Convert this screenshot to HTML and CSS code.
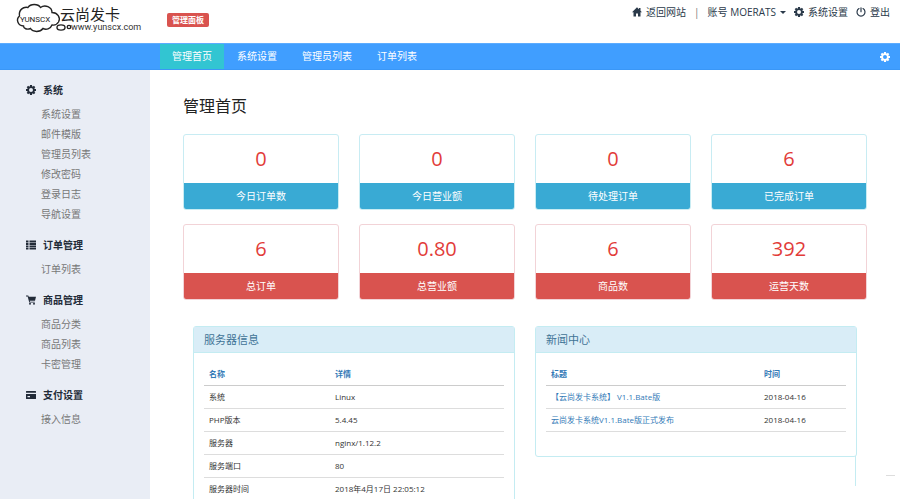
FILE: index.html
```html
<!DOCTYPE html>
<html lang="zh-CN">
<head>
<meta charset="utf-8">
<title>管理首页</title>
<link rel="stylesheet" href="styles.css">
</head>
<body>
<svg class="sprite" aria-hidden="true">
  <symbol id="cog" viewBox="0 0 20 20">
    <circle cx="10" cy="10" r="5.800" fill="none" stroke="currentColor" stroke-width="3.600"/>
    <path fill="none" stroke="currentColor" stroke-width="4.200" d="M10 0v4M10 16v4M0 10h4M16 10h4M2.800 2.800l2.800 2.800M14.400 14.400l2.800 2.800M2.800 17.200l2.800-2.800M14.400 5.600l2.800-2.800"/>
  </symbol>
  <symbol id="home" viewBox="0 0 20 20">
    <path fill="currentColor" d="M10 .5 0 10.500h3V19h5v-6h4v6h5v-8.500h3L17 7.500V2h-3v2.500z"/>
  </symbol>
  <symbol id="power" viewBox="0 0 20 20">
    <path fill="none" stroke="currentColor" stroke-width="2.400" stroke-linecap="round" d="M6 3.200a8 8 0 1 0 8 0M10 1.500v8"/>
  </symbol>
  <symbol id="list" viewBox="0 0 20 20">
    <path fill="currentColor" d="M0 1h5v4H0zM7 1h13v4H7zM0 6h5v4H0zM7 6h13v4H7zM0 11h5v4H0zM7 11h13v4H7zM0 16h5v3H0zM7 16h13v3H7z"/>
  </symbol>
  <symbol id="cart" viewBox="0 0 20 20">
    <path fill="currentColor" d="M0 1h4.500l1 2.500H20L18 11.500H7.500l.5 2h9.500V15H6.500L3.300 3H0z"/>
    <circle cx="8" cy="17.500" r="1.900" fill="currentColor"/>
    <circle cx="16" cy="17.500" r="1.900" fill="currentColor"/>
  </symbol>
  <symbol id="card" viewBox="0 0 20 20">
    <path fill="currentColor" d="M1 2h18q1 0 1 1v2.500H0V3q0-1 1-1zM0 8h20v9q0 1-1 1H1q-1 0-1-1zM3 12v2.500h5V12z" fill-rule="evenodd"/>
  </symbol>
</svg>

<header class="top">
  <a class="logo" href="#" aria-label="云尚发卡">
    <svg viewBox="0 0 124 32" role="img" aria-label="云尚发卡 www.yunscx.com">
      <path class="cloud" d="M7.500 22C2 22-.5 15.500 3.500 12 2.500 6 7 2.500 12 3.500c2.500-4 10-4 12.500 0C29 0 36 3 36 8.500c5.500 0 9 5 6.500 9.500-1.500 2.500-4 3.500-6.500 3-1.500 4-6 5-9 3.500-3 4-10 4-12.500 0-3.500 1.500-7 0-7-2.500z"/>
      <ellipse class="cloud" cx="45" cy="23.500" rx="4" ry="2.600"/>
      <ellipse class="cloud" cx="53" cy="23" rx="1.800" ry="1.600"/>
      <text class="logo-mark" x="4" y="18">YUNSCX</text>
      <text class="logo-name" x="44" y="16">云尚发卡</text>
      <text class="logo-url" x="55" y="26">www.yunscx.com</text>
    </svg>
  </a>
  <span class="badge">管理面板</span>
  <nav class="account">
    <a href="#"><svg class="icon"><use href="#home"/></svg>返回网站</a>
    <span class="divider">|</span>
    <button type="button" class="user">账号 MOERATS<span class="caret"></span></button>
    <a href="#"><svg class="icon"><use href="#cog"/></svg>系统设置</a>
    <a href="#"><svg class="icon"><use href="#power"/></svg>登出</a>
  </nav>
</header>

<nav class="bar">
  <a class="active" href="#">管理首页</a>
  <a href="#">系统设置</a>
  <a href="#">管理员列表</a>
  <a href="#">订单列表</a>
  <button type="button" class="bar-cog" aria-label="设置"><svg class="icon"><use href="#cog"/></svg></button>
</nav>

<div class="layout">
  <aside class="side">
    <section>
      <h2><svg class="icon"><use href="#cog"/></svg>系统</h2>
      <ul>
        <li><a href="#">系统设置</a></li>
        <li><a href="#">邮件模版</a></li>
        <li><a href="#">管理员列表</a></li>
        <li><a href="#">修改密码</a></li>
        <li><a href="#">登录日志</a></li>
        <li><a href="#">导航设置</a></li>
      </ul>
    </section>
    <section>
      <h2><svg class="icon"><use href="#list"/></svg>订单管理</h2>
      <ul>
        <li><a href="#">订单列表</a></li>
      </ul>
    </section>
    <section>
      <h2><svg class="icon"><use href="#cart"/></svg>商品管理</h2>
      <ul>
        <li><a href="#">商品分类</a></li>
        <li><a href="#">商品列表</a></li>
        <li><a href="#">卡密管理</a></li>
      </ul>
    </section>
    <section>
      <h2><svg class="icon"><use href="#card"/></svg>支付设置</h2>
      <ul>
        <li><a href="#">接入信息</a></li>
      </ul>
    </section>
  </aside>

  <main class="main">
    <h1>管理首页</h1>
    <div class="stats">
      <div class="stat info"><strong>0</strong><span>今日订单数</span></div>
      <div class="stat info"><strong>0</strong><span>今日营业额</span></div>
      <div class="stat info"><strong>0</strong><span>待处理订单</span></div>
      <div class="stat info"><strong>6</strong><span>已完成订单</span></div>
      <div class="stat danger"><strong>6</strong><span>总订单</span></div>
      <div class="stat danger"><strong>0.80</strong><span>总营业额</span></div>
      <div class="stat danger"><strong>6</strong><span>商品数</span></div>
      <div class="stat danger"><strong>392</strong><span>运营天数</span></div>
    </div>

    <div class="panels">
      <section class="panel">
        <h3>服务器信息</h3>
        <div class="panel-body">
          <table class="server">
            <thead><tr><th>名称</th><th>详情</th></tr></thead>
            <tbody>
              <tr><td>系统</td><td>Linux</td></tr>
              <tr><td>PHP版本</td><td>5.4.45</td></tr>
              <tr><td>服务器</td><td>nginx/1.12.2</td></tr>
              <tr><td>服务端口</td><td>80</td></tr>
              <tr><td>服务器时间</td><td>2018年4月17日 22:05:12</td></tr>
            </tbody>
          </table>
        </div>
      </section>
      <section class="panel news-panel">
        <h3>新闻中心</h3>
        <div class="panel-body">
          <table class="news">
            <thead><tr><th>标题</th><th>时间</th></tr></thead>
            <tbody>
              <tr><td><a href="#">【云尚发卡系统】 V1.1.Bate版</a></td><td>2018-04-16</td></tr>
              <tr><td><a href="#">云尚发卡系统V1.1.Bate版正式发布</a></td><td>2018-04-16</td></tr>
            </tbody>
          </table>
        </div>
      </section>
    </div>
  </main>
</div>
</body>
</html>
```

FILE: styles.css
```css
* {
  box-sizing: border-box;
}

body {
  display: flex;
  flex-direction: column;
  height: 100vh;
  margin: 0;
  overflow: hidden;
  background: #fff;
  color: #333;
  font: 10px/20px "Open Sans", "Noto Sans CJK SC", sans-serif;
}

a {
  color: inherit;
  text-decoration: none;
}

button {
  padding: 0;
  border: 0;
  background: none;
  color: inherit;
  font: inherit;
}

.sprite {
  display: none;
}

.icon {
  flex: none;
  width: 10px;
  height: 10px;
}

/* Header */
.top {
  display: flex;
  flex: none;
  align-items: flex-start;
  height: 43px;
  padding: 2px 10px 0 16px;
}

.logo {
  width: 124px;
  height: 32px;
  margin: 2px 27px 0 0;
}

.logo svg {
  display: block;
  width: 124px;
  height: 32px;
  overflow: visible;
}

.cloud {
  fill: #fff;
  stroke: #222;
  stroke-width: 1.4;
}

.logo-mark {
  fill: #222;
  font: 8px Roboto, sans-serif;
}

.logo-name {
  fill: #222;
  font: 15px "Noto Sans CJK SC", sans-serif;
}

.logo-url {
  fill: #333;
  font: 9px Roboto, sans-serif;
}

.badge {
  margin-top: 11px;
  padding: 0 5px;
  border-radius: 2px;
  background: #d9534f;
  color: #fff;
  font-size: 8px;
  font-weight: 700;
  line-height: 14px;
}

.account {
  display: flex;
  gap: 8px;
  margin-left: auto;
  color: #2b3a4a;
}

.account a,
.user {
  display: flex;
  align-items: center;
  gap: 4px;
}

.divider {
  color: #777;
}

.caret {
  border: 3px solid transparent;
  border-top-color: currentColor;
  border-bottom: 0;
}

/* Main navigation */
.bar {
  display: flex;
  flex: none;
  gap: 1px;
  height: 27px;
  padding: 0 10px 0 160px;
  border-top: 1px solid #5cacff;
  border-bottom: 1px solid #3a97f7;
  background: #409eff;
  color: #fff;
  line-height: 25px;
}

.bar a {
  padding: 0 12px;
}

.bar .active {
  background: #32c5d2;
}

.bar-cog {
  display: flex;
  align-items: center;
  margin-left: auto;
}

/* Sidebar */
.layout {
  display: flex;
  flex: 1;
  min-height: 0;
}

.side {
  flex: none;
  width: 150px;
  padding: 10px 0 0 26px;
  background: #e9edf5;
}

.side section {
  margin-bottom: 11px;
}

.side h2 {
  display: flex;
  align-items: center;
  gap: 7px;
  margin: 0 0 4px;
  color: #222b38;
  font-size: 10px;
  font-weight: 700;
}

.side ul {
  margin: 0;
  padding: 0 0 0 15px;
  color: #777;
  list-style: none;
}

.side li a {
  display: block;
}

/* Content */
.main {
  flex: 1;
  min-width: 0;
  overflow: hidden;
  padding: 24px 33px 0;
}

.main h1 {
  margin: 0 0 16px;
  color: #222;
  font-size: 16px;
  font-weight: 400;
  line-height: 24px;
}

.stats {
  display: grid;
  grid-template-columns: repeat(4, 1fr);
  gap: 14px 20px;
}

.stat {
  display: flex;
  flex-direction: column;
  overflow: hidden;
  border: 1px solid;
  border-radius: 3px;
  text-align: center;
}

.stat strong {
  color: #e23c39;
  font-size: 20px;
  font-weight: 400;
  line-height: 48px;
}

.stat span {
  color: #fff;
  line-height: 26px;
}

.info {
  border-color: #c8ecf3;
}

.info span {
  background: #39aad4;
}

.danger {
  border-color: #f2d3d7;
}

.danger span {
  background: #d9534f;
}

.panels {
  display: grid;
  grid-template-columns: 1fr 1fr;
  align-items: start;
  gap: 20px;
  margin-top: 26px;
  padding: 0 10px;
}

.panel {
  border: 1px solid #c4ecf2;
  border-radius: 3px;
}

.panel h3 {
  margin: 0;
  padding: 0 10px;
  border-bottom: 1px solid #c4ecf2;
  background: #d9edf7;
  color: #3f7396;
  font-size: 11px;
  font-weight: 400;
  line-height: 25px;
}

.panel-body {
  padding: 10px 10px 24px;
}

table {
  width: 100%;
  border-collapse: separate;
  border-spacing: 0;
  table-layout: fixed;
  font-size: 8px;
  line-height: 22px;
}

th,
td {
  padding: 0 5px;
  border-bottom: 1px solid #ddd;
  text-align: left;
}

th {
  border-color: #ccc;
  color: #337ab7;
  font-weight: 700;
}

td a {
  color: #337ab7;
}

.server th:first-child {
  width: 42%;
}

.news th:first-child {
  width: 71%;
}

/* Trailing edge and dash below the news panel */
.news-panel {
  position: relative;
}

.news-panel::after {
  position: absolute;
  top: 100%;
  right: 0;
  width: 1px;
  height: 30px;
  background: #c4ecf2;
  content: "";
}

.news-panel::before {
  position: absolute;
  top: calc(100% + 19px);
  left: calc(100% + 30px);
  width: 9px;
  height: 1px;
  background: #ddd;
  content: "";
}
```
